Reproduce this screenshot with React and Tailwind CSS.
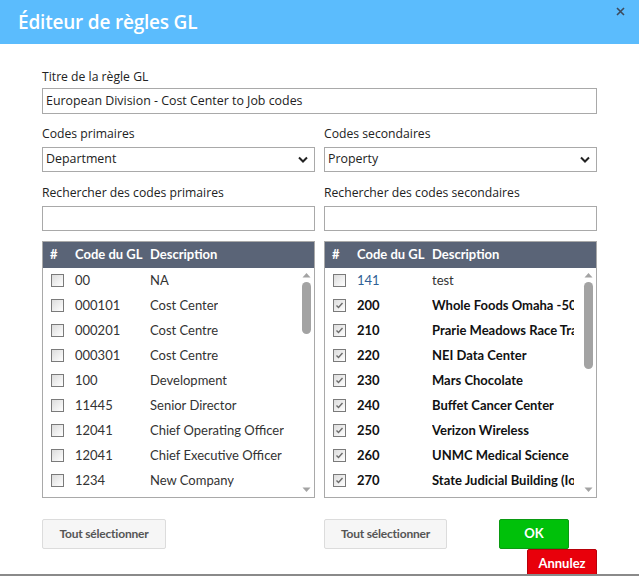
import React from "react";

const leftRows = [
  { code: "00", desc: "NA" },
  { code: "000101", desc: "Cost Center" },
  { code: "000201", desc: "Cost Centre" },
  { code: "000301", desc: "Cost Centre" },
  { code: "100", desc: "Development" },
  { code: "11445", desc: "Senior Director" },
  { code: "12041", desc: "Chief Operating Officer" },
  { code: "12041", desc: "Chief Executive Officer" },
  { code: "1234", desc: "New Company" },
];

const rightRows = [
  { code: "141", desc: "test", checked: false, link: true },
  { code: "200", desc: "Whole Foods Omaha -5000 Dodge", checked: true },
  { code: "210", desc: "Prarie Meadows Race Track", checked: true },
  { code: "220", desc: "NEI Data Center", checked: true },
  { code: "230", desc: "Mars Chocolate", checked: true },
  { code: "240", desc: "Buffet Cancer Center", checked: true },
  { code: "250", desc: "Verizon Wireless", checked: true },
  { code: "260", desc: "UNMC Medical Science", checked: true },
  { code: "270", desc: "State Judicial Building (Iowa)", checked: true },
];

function Checkbox({ checked }) {
  return (
    <div className="w-[13px] h-[13px] border border-[#7a7a7a] bg-gradient-to-br from-[#dcdcdc] to-[#ffffff] flex items-center justify-center">
      {checked && (
        <svg width="9" height="9" viewBox="0 0 9 9">
          <path d="M1.5 4.5 L3.5 6.5 L7.5 2" stroke="#6b6b6b" strokeWidth="1.4" fill="none" />
        </svg>
      )}
    </div>
  );
}

function Table({ rows, thumbH }) {
  return (
    <div className="border border-[#a9a9a9] h-[257px] flex flex-col">
      <div className="h-[26px] bg-[#5a6477] text-white font-bold text-[13px] flex items-center font-['Lato',sans-serif] shrink-0">
        <div className="w-[32px] pl-[7px]">#</div>
        <div className="w-[75px]">Code du GL</div>
        <div>Description</div>
      </div>
      <div className="flex flex-1 min-h-0 bg-white">
        <div className="flex-1 min-w-0 overflow-hidden pr-[6px]">
          {rows.map((r, i) => (
            <div key={i} className={`h-[25px] flex items-center text-[13px] font-['Lato',sans-serif] ${r.checked ? "font-bold text-[#111]" : "text-[#333]"}`}>
              <div className="w-[32px] pl-[8px] shrink-0">
                <Checkbox checked={r.checked} />
              </div>
              <div className={`w-[75px] shrink-0 ${r.link ? "text-[#2f5f96]" : ""}`}>{r.code}</div>
              <div className="whitespace-nowrap overflow-hidden">{r.desc}</div>
            </div>
          ))}
        </div>
        <div className="w-[16px] shrink-0 flex flex-col items-center pt-[4px] pb-[4px]">
          <svg width="9" height="6" viewBox="0 0 9 6" className="shrink-0">
            <path d="M0.5 5.5 L4.5 1 L8.5 5.5 Z" fill="#a3a3a3" />
          </svg>
          <div className="flex-1 w-full flex flex-col items-center pt-[4px]">
            <div className={`w-[9px] rounded-full bg-[#a3a3a3] ${thumbH}`}></div>
          </div>
          <svg width="9" height="6" viewBox="0 0 9 6" className="shrink-0">
            <path d="M0.5 0.5 L4.5 5 L8.5 0.5 Z" fill="#a3a3a3" />
          </svg>
        </div>
      </div>
    </div>
  );
}

function Select({ value }) {
  return (
    <div className="h-[25px] border border-[#a9a9a9] bg-white flex items-center justify-between pl-[3px] pr-[6px] text-[12.4px] text-[#222]">
      <span>{value}</span>
      <svg width="10" height="7" viewBox="0 0 10 7">
        <path d="M1 1.5 L5 5.5 L9 1.5" stroke="#222" strokeWidth="2" fill="none" />
      </svg>
    </div>
  );
}

const grayBtn =
  "h-[30px] bg-[#f6f6f6] border border-[#dcdcdc] rounded-[2px] text-[#555] font-bold text-[12px] tracking-[-0.2px] font-['Lato',sans-serif]";

export default function App() {
  return (
    <div className="w-[639px] h-[576px] bg-white relative overflow-hidden font-['Open_Sans',sans-serif]">
      <div className="h-[44px] bg-[#5bbcfd] flex items-start justify-between pl-[18px] pr-[14px]">
        <div className="text-white text-[19px] font-semibold tracking-[-0.2px] leading-[44px]">Éditeur de règles GL</div>
        <svg width="9" height="9" viewBox="0 0 9 9" className="mt-[7px]">
          <path d="M1 1 L8 8 M8 1 L1 8" stroke="#3d4a5c" strokeWidth="1.6" />
        </svg>
      </div>
      <div className="px-[42px] pt-[25px] text-[12.2px] text-[#222]">
        <div className="h-[16px] leading-[16px] mb-[3px]">Titre de la règle GL</div>
        <div className="h-[26px] border border-[#a9a9a9] flex items-center pl-[3px] text-[12.4px]">
          European Division - Cost Center to Job codes
        </div>
        <div className="grid grid-cols-2 gap-x-[9px]">
          <div>
            <div className="h-[16px] leading-[16px] mt-[12px] mb-[5px]">Codes primaires</div>
            <Select value="Department" />
            <div className="h-[16px] leading-[16px] mt-[13px] mb-[5px]">Rechercher des codes primaires</div>
            <div className="h-[25px] border border-[#a9a9a9] bg-white"></div>
          </div>
          <div>
            <div className="h-[16px] leading-[16px] mt-[12px] mb-[5px]">Codes secondaires</div>
            <Select value="Property" />
            <div className="h-[16px] leading-[16px] mt-[13px] mb-[5px]">Rechercher des codes secondaires</div>
            <div className="h-[25px] border border-[#a9a9a9] bg-white"></div>
          </div>
          <div className="mt-[10px]">
            <Table rows={leftRows} thumbH="h-[52px]" />
          </div>
          <div className="mt-[10px]">
            <Table rows={rightRows} thumbH="h-[87px]" />
          </div>
          <div className="mt-[21px]">
            <button className={`${grayBtn} w-[124px]`}>Tout sélectionner</button>
          </div>
          <div className="mt-[21px] flex">
            <button className={`${grayBtn} w-[123px]`}>Tout sélectionner</button>
            <div className="ml-auto w-[98px] flex flex-col">
              <button className="h-[30px] w-[70px] bg-[#00c10a] border border-[#0a9a12] rounded-[2px] text-white font-bold text-[13px] font-['Lato',sans-serif]">
                OK
              </button>
              <button className="self-end h-[30px] w-[70px] bg-[#e8000b] border border-[#b8000a] rounded-[2px] text-white font-bold text-[13px] font-['Lato',sans-serif]">
                Annulez
              </button>
            </div>
          </div>
        </div>
      </div>
      <div className="absolute left-0 right-0 bottom-0 h-[2px] bg-[#8a8a8a]"></div>
    </div>
  );
}
